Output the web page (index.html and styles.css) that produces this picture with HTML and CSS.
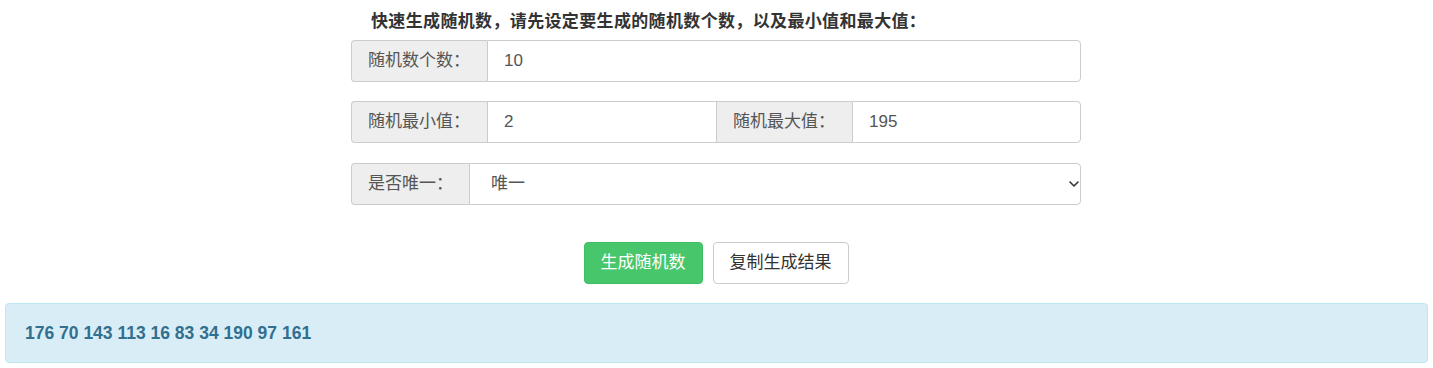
FILE: index.html
```html
<!DOCTYPE html>
<html lang="zh-CN">
<head>
<meta charset="utf-8">
<title>随机数生成</title>
<link rel="stylesheet" href="styles.css">
</head>
<body>
<div class="container">
  <div class="title">快速生成随机数，请先设定要生成的随机数个数，以及最小值和最大值：</div>
  <div class="group g1">
    <span class="addon w-lg">随机数个数：</span>
    <input class="control" type="text" value="10">
  </div>
  <div class="group g2">
    <div class="half">
      <span class="addon w-lg">随机最小值：</span>
      <input class="control" type="text" value="2">
    </div>
    <div class="half">
      <span class="addon w-lg mid">随机最大值：</span>
      <input class="control" type="text" value="195">
    </div>
  </div>
  <div class="group g3">
    <span class="addon w-sm">是否唯一：</span>
    <div class="select-wrap">
      <select class="control select">
        <option>唯一</option>
        <option>不唯一</option>
      </select>
      <svg class="chevron" width="10" height="6" viewBox="0 0 10 6"><path d="M1 1 L5 5 L9 1" fill="none" stroke="#333" stroke-width="1.6" stroke-linecap="round" stroke-linejoin="round"/></svg>
    </div>
  </div>
  <div class="actions">
    <button class="btn btn-success" type="button">生成随机数</button>
    <button class="btn btn-default" type="button">复制生成结果</button>
  </div>
</div>
<div class="alert">176 70 143 113 16 83 34 190 97 161</div>
</body>
</html>
```

FILE: styles.css
```css
* { box-sizing: border-box; }
body {
  margin: 0;
  font-family: "Liberation Sans", "Noto Sans CJK SC", Arial, sans-serif;
  font-size: 17px;
  line-height: 24px;
  color: #333;
  background: #fff;
}
.container {
  width: 731px;
  padding-right: 1px;
  margin: 0 auto;
}
.title {
  padding: 10px 0 0 20px;
  height: 40px;
  font-weight: bold;
  letter-spacing: 0.35px;
  color: #333;
}
.group {
  display: flex;
  height: 42px;
}
.g1 { margin-bottom: 19px; }
.g2 { margin-bottom: 20px; }
.half {
  display: flex;
  flex: 1 1 0;
  min-width: 0;
}
.addon {
  flex: none;
  display: flex;
  align-items: center;
  padding: 0 16px;
  background: #eee;
  border: 1px solid #ccc;
  border-right: 0;
  color: #555;
  white-space: nowrap;
}
.w-lg { width: 136px; }
.w-sm { width: 118px; }
.g1 .addon, .g3 .addon, .g2 .half:first-child .addon {
  border-radius: 4px 0 0 4px;
}
.mid { border-left: 1px solid #ccc; }
.control {
  flex: 1 1 0;
  min-width: 0;
  height: 42px;
  margin: 0;
  padding: 8px 16px;
  border: 1px solid #ccc;
  font: inherit;
  color: #555;
  background: #fff;
  outline: none;
}
.g1 .control, .g2 .half:last-child .control, .select {
  border-radius: 0 4px 4px 0;
}
.g2 .half:first-child .control { border-right: 0; }
.select-wrap {
  position: relative;
  flex: 1 1 0;
  display: flex;
}
.select {
  -webkit-appearance: none;
  appearance: none;
  padding-left: 21px;
  width: 100%;
}
.chevron {
  position: absolute;
  right: 2px;
  top: 18px;
  pointer-events: none;
}
.actions {
  display: flex;
  justify-content: center;
  gap: 10px;
  margin-top: 37px;
}
.btn {
  height: 42px;
  padding: 8px 16px;
  font: inherit;
  border-radius: 4px;
  border: 1px solid;
  cursor: pointer;
}
.btn-success {
  background: #48c66c;
  border-color: #40bd63;
  color: #fff;
}
.btn-default {
  background: #fff;
  border-color: #ccc;
  color: #333;
}
.alert {
  margin: 19px 5px 0;
  height: 60px;
  padding: 17px 19px;
  background: #d9edf7;
  border: 1px solid #bce8f1;
  border-radius: 4px;
  color: #31708f;
  font-weight: bold;
  font-size: 17.5px;
}
```
